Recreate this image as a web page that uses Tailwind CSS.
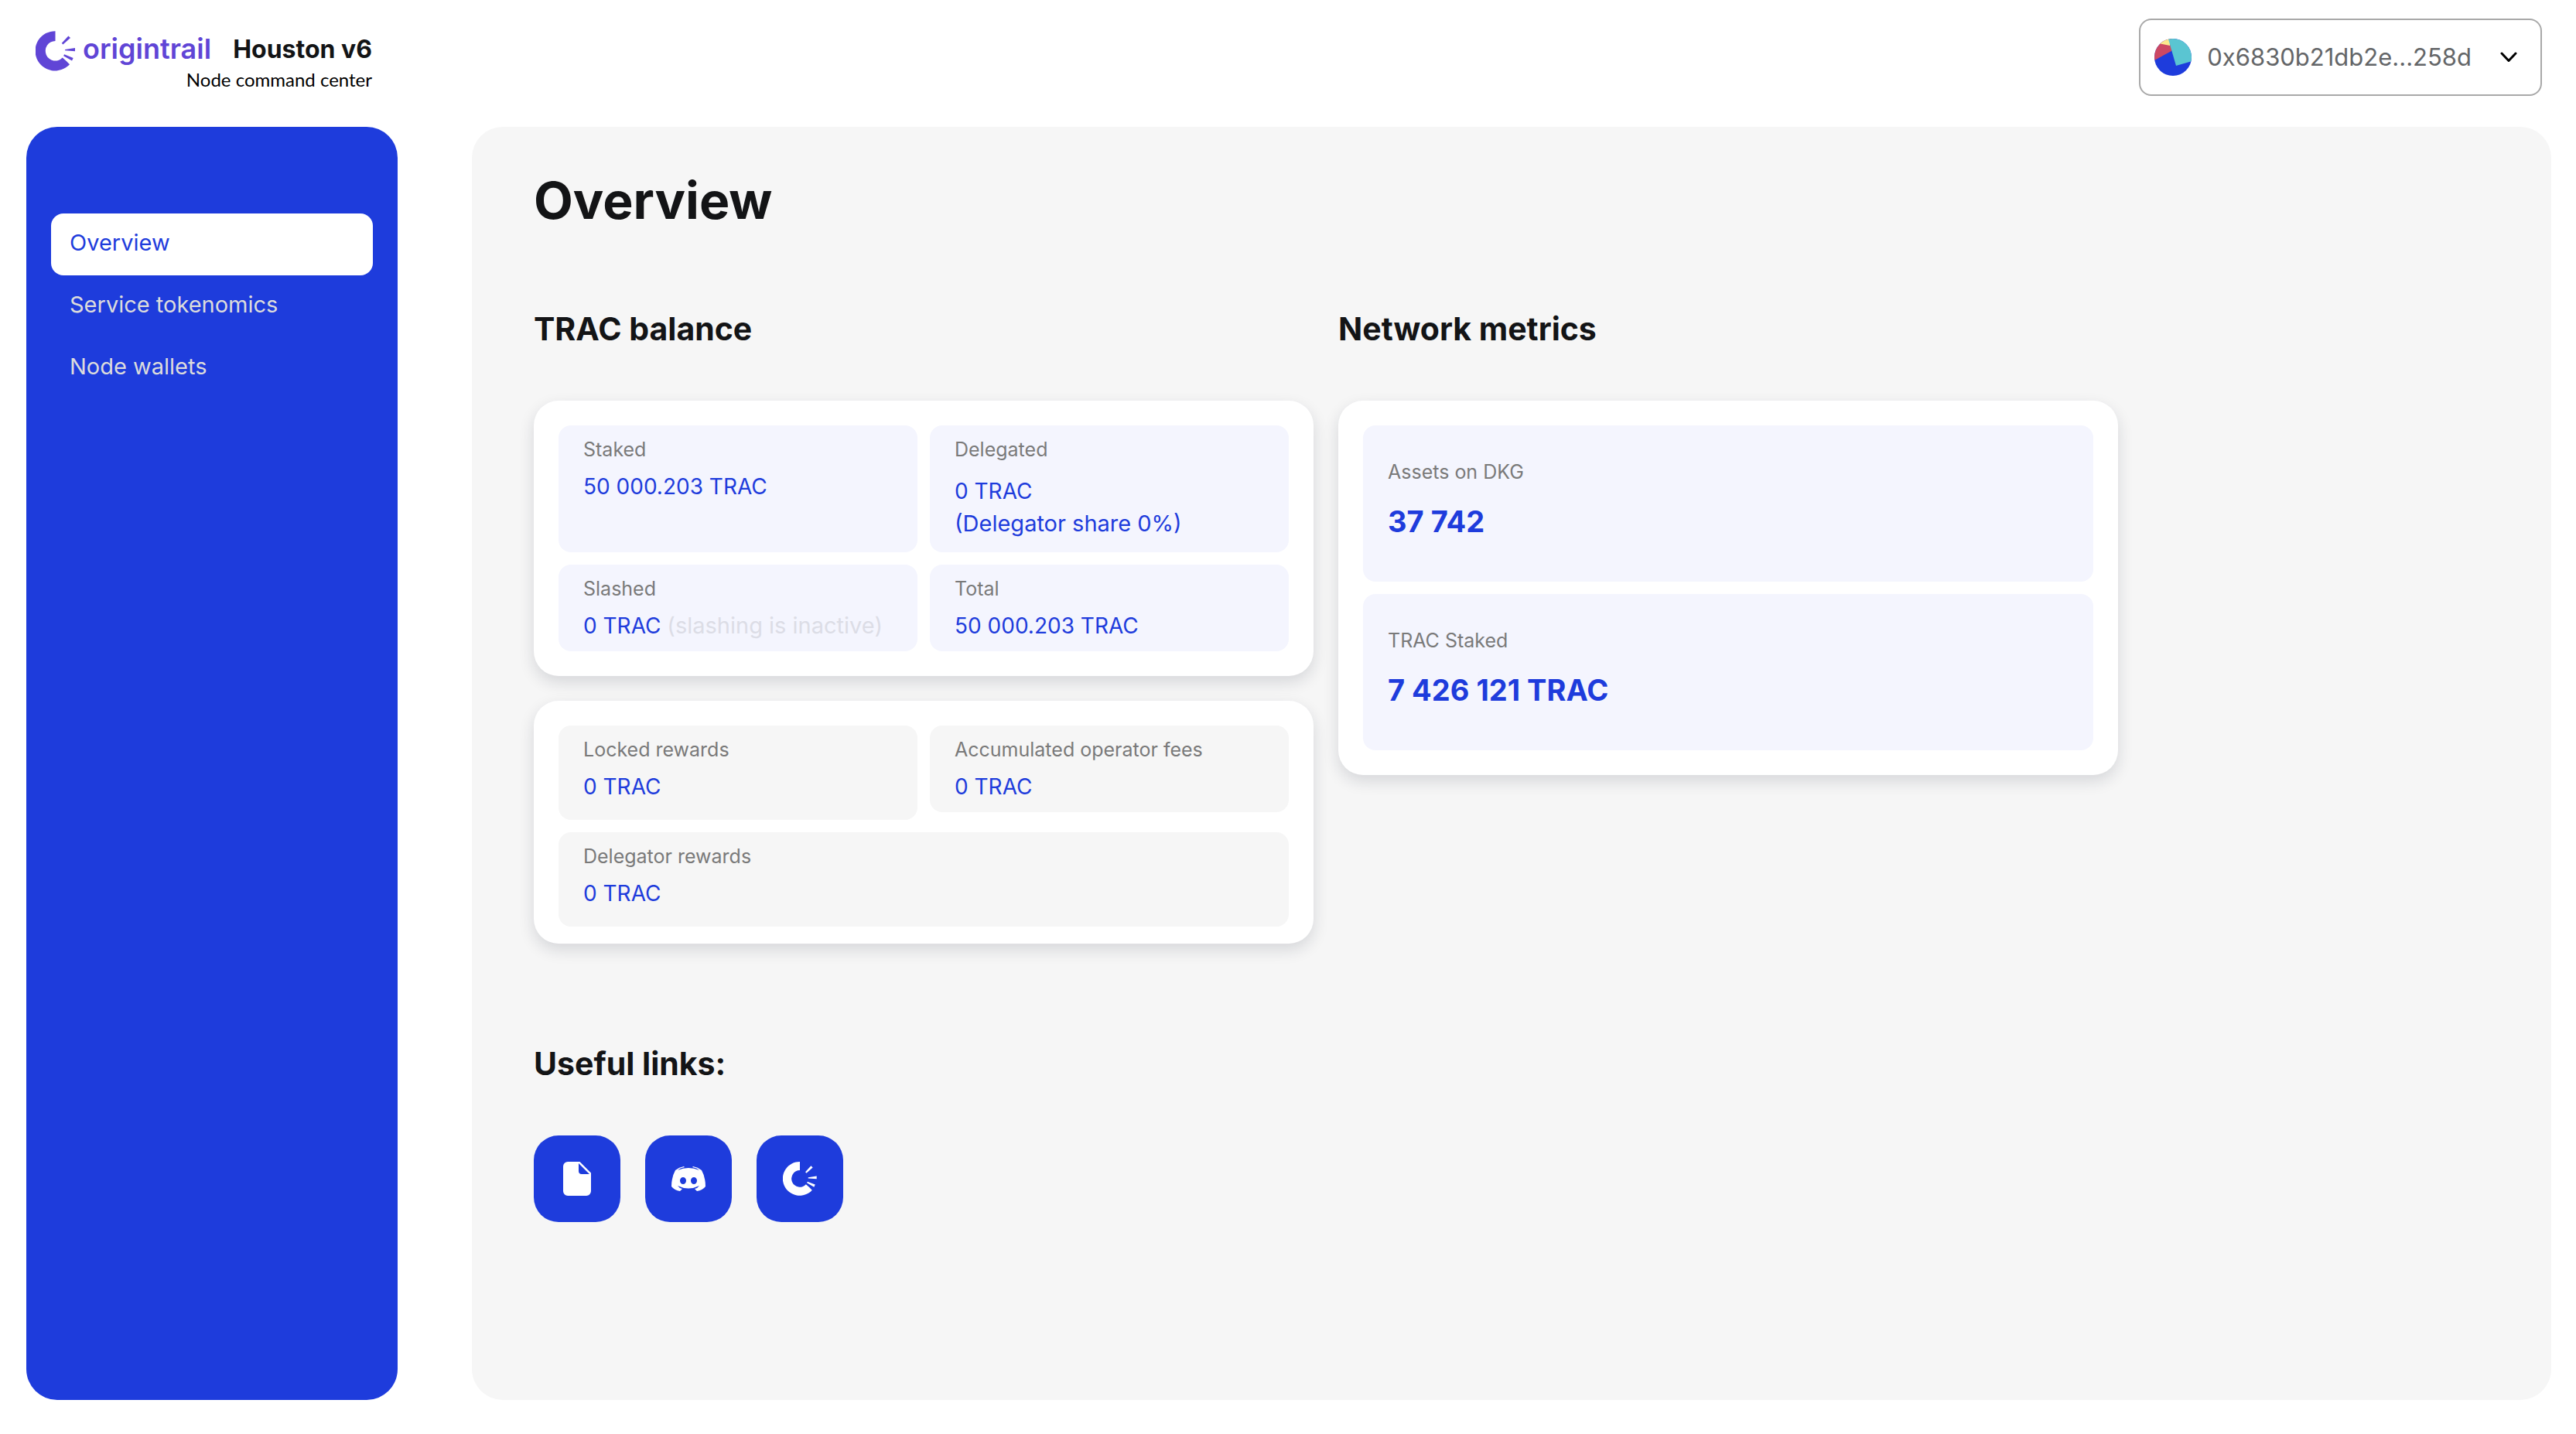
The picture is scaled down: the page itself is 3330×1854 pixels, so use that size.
<!DOCTYPE html>
<html lang="en">
<head>
<meta charset="utf-8">
<meta name="viewport" content="width=device-width, initial-scale=1">
<title>Houston v6 – Overview</title>
<script src="https://cdn.jsdelivr.net/npm/@tailwindcss/browser@4"></script>
</head>
<body class="flex min-h-screen flex-col bg-white pb-11 font-['Inter',sans-serif] text-[#131416]">

<svg class="hidden" aria-hidden="true">
  <symbol id="mark" viewBox="48 60 154 156">
    <path d="M125 60A77.500 77.500 0 1 0 181 190L174 183 169 178 153 164A38.500 38.500 0 1 1 125 99Z"/>
    <path d="M150 107L176 79 184 87 155 112ZM163 132L202 126V139L163 136ZM160 151L195 165 190 176 157 157Z"/>
  </symbol>
</svg>

<header class="flex h-[164px] items-start justify-between pr-11 pl-[46px]">
  <a href="#" class="mt-10 flex gap-[10px]">
    <svg class="h-[52px] w-[51px] text-[#6045d6]" fill="currentColor" aria-hidden="true"><use href="#mark"/></svg>
    <span class="flex flex-col items-end">
      <span class="flex h-12 items-start gap-7">
        <span class="text-[36px] leading-[46px] font-semibold text-[#6045d6]">origintrail</span>
        <span class="text-[32px] leading-[48px] font-bold">Houston v6</span>
      </span>
      <span class="font-['Lato',sans-serif] text-[24px] leading-[30px] text-black">Node command center</span>
    </span>
  </a>
  <button type="button" class="mt-6 flex h-[100px] items-center rounded-2xl border-2 border-[#a9a9a9] bg-white pr-[30px] pl-[18px]">
    <svg class="size-12 rounded-full" viewBox="0 0 48 48" aria-hidden="true">
      <rect width="48" height="48" fill="#1e3cdc"/>
      <path d="M0 0H24L22 16 0 28Z" fill="#cc4863"/>
      <path d="M5 6L10 0H20V9Z" fill="#fbe98d"/>
      <path d="M17 -3L28 35 52 28V-3Z" fill="#5ac5d2"/>
    </svg>
    <span class="ml-5 text-[31px] leading-10 text-[#646668]">0x6830b21db2e...258d</span>
    <svg class="ml-[37px] h-[14px] w-[22px]" viewBox="0 0 22 14" fill="none" stroke="#000" stroke-width="3" stroke-linecap="round" stroke-linejoin="round" aria-hidden="true"><path d="M2 2L11 11.500 20 2"/></svg>
  </button>
</header>

<div class="flex grow gap-24 pr-8 pl-[34px]">
  <nav class="w-[480px] shrink-0 rounded-[40px] bg-[#1e3cdc] px-8 pt-28" aria-label="Main">
    <ul class="text-[29px] leading-10 text-[#dcdcdc]">
      <li><a href="#" aria-current="page" class="flex h-20 items-center rounded-2xl bg-white px-6 pb-1 text-[#1e3cdc]">Overview</a></li>
      <li><a href="#" class="flex h-20 items-center rounded-2xl px-6 pb-1">Service tokenomics</a></li>
      <li><a href="#" class="flex h-20 items-center rounded-2xl px-6 pb-1">Node wallets</a></li>
    </ul>
  </nav>

  <main class="grow rounded-[40px] bg-[#f6f6f6] px-20 pt-14 pb-20">
    <h1 class="text-[66px] leading-[78px] font-bold">Overview</h1>

    <div class="mt-24 grid max-w-[2048px] grid-cols-2 items-start gap-8">
      <section>
        <h2 class="mb-[62px] text-[41px] leading-[62px] font-bold">TRAC balance</h2>
        <div class="flex flex-col gap-8">
          <dl class="grid grid-cols-2 gap-4 rounded-4xl bg-white p-8 text-[28px] leading-[42px] text-[#1e3cdc] shadow-[0_8px_20px_rgba(20,30,50,0.14)]">
            <div class="rounded-2xl bg-[#f4f5fe] px-8 pt-4 pb-3">
              <dt class="text-[25px] leading-[30px] text-[#7a7a7a]">Staked</dt>
              <dd class="mt-3">50 000.203 TRAC</dd>
            </div>
            <div class="rounded-2xl bg-[#f4f5fe] px-8 py-4">
              <dt class="text-[25px] leading-[30px] text-[#7a7a7a]">Delegated</dt>
              <dd class="mt-[18px]">0 TRAC<br><span class="text-[29px]">(Delegator share 0%)</span></dd>
            </div>
            <div class="rounded-2xl bg-[#f4f5fe] px-8 pt-4 pb-3">
              <dt class="text-[25px] leading-[30px] text-[#7a7a7a]">Slashed</dt>
              <dd class="mt-3">0 TRAC <span class="text-[29px] text-[#dcdde6]">(slashing is inactive)</span></dd>
            </div>
            <div class="rounded-2xl bg-[#f4f5fe] px-8 pt-4 pb-3">
              <dt class="text-[25px] leading-[30px] text-[#7a7a7a]">Total</dt>
              <dd class="mt-3">50 000.203 TRAC</dd>
            </div>
          </dl>
          <dl class="grid grid-cols-2 items-start gap-4 rounded-4xl bg-white px-8 pt-8 pb-[22px] text-[28px] leading-[42px] text-[#1e3cdc] shadow-[0_8px_20px_rgba(20,30,50,0.14)]">
            <div class="rounded-2xl bg-[#f6f6f6] px-8 pt-4 pb-[22px]">
              <dt class="text-[25px] leading-[30px] text-[#7a7a7a]">Locked rewards</dt>
              <dd class="mt-3">0 TRAC</dd>
            </div>
            <div class="rounded-2xl bg-[#f6f6f6] px-8 pt-4 pb-3">
              <dt class="text-[25px] leading-[30px] text-[#7a7a7a]">Accumulated operator fees</dt>
              <dd class="mt-3">0 TRAC</dd>
            </div>
            <div class="col-span-2 rounded-2xl bg-[#f6f6f6] px-8 pt-4 pb-[22px]">
              <dt class="text-[25px] leading-[30px] text-[#7a7a7a]">Delegator rewards</dt>
              <dd class="mt-3">0 TRAC</dd>
            </div>
          </dl>
        </div>
      </section>

      <section>
        <h2 class="mb-[62px] text-[41px] leading-[62px] font-bold">Network metrics</h2>
        <dl class="flex flex-col gap-4 rounded-4xl bg-white p-8 text-[38px] leading-[60px] font-bold text-[#1e3cdc] shadow-[0_8px_20px_rgba(20,30,50,0.14)]">
          <div class="rounded-2xl bg-[#f4f5fe] px-8 pt-[45px] pb-12">
            <dt class="text-[25px] leading-[30px] font-normal text-[#7a7a7a]">Assets on DKG</dt>
            <dd class="mt-[19px]">37 742</dd>
          </div>
          <div class="rounded-2xl bg-[#f4f5fe] px-8 pt-[45px] pb-12">
            <dt class="text-[25px] leading-[30px] font-normal text-[#7a7a7a]">TRAC Staked</dt>
            <dd class="mt-[19px]">7 426 121 TRAC</dd>
          </div>
        </dl>
      </section>
    </div>

    <section class="mt-[124px]">
      <h2 class="mb-[62px] text-[41px] leading-[62px] font-bold">Useful links:</h2>
      <div class="flex gap-8">
        <a href="#" aria-label="Documentation" class="flex size-28 items-center justify-center rounded-4xl bg-[#1e3cdc] text-white">
          <svg class="h-11 w-9" viewBox="0 0 36 44" fill="currentColor" aria-hidden="true"><path fill-rule="evenodd" d="M6 0H21.500L36 14.500V38A6 6 0 0 1 30 44H6A6 6 0 0 1 0 38V6A6 6 0 0 1 6 0ZM20 2V12A4 4 0 0 0 24 16H34Z"/></svg>
        </a>
        <a href="#" aria-label="Discord" class="flex size-28 items-center justify-center rounded-4xl bg-[#1e3cdc] text-white">
          <svg class="h-8 w-11" viewBox="0 0 44 32" fill="currentColor" aria-hidden="true"><path fill-rule="evenodd" d="M5 5Q10 1 16 0L17 1Q11 2 8 5Q22 -1 36 5Q33 2 27 1L28 0Q34 1 39 5Q44 14 44 26Q40 31 33 32L30 29Q34 28 36 25Q22 32 8 25Q10 28 14 29L11 32Q4 31 0 26Q0 14 5 5ZM15 14A4 4.500 0 1 0 15 23A4 4.500 0 1 0 15 14ZM29 14A4 4.500 0 1 0 29 23A4 4.500 0 1 0 29 14Z"/></svg>
        </a>
        <a href="#" aria-label="OriginTrail" class="flex size-28 items-center justify-center rounded-4xl bg-[#1e3cdc] text-white">
          <svg class="size-11" fill="currentColor" aria-hidden="true"><use href="#mark"/></svg>
        </a>
      </div>
    </section>
  </main>
</div>
</body>
</html>
